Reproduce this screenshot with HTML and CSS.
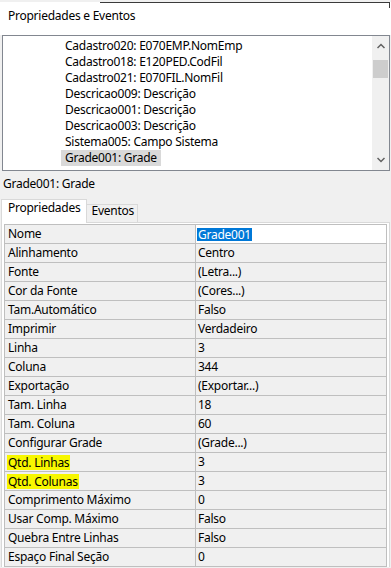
FILE: index.html
```html
<!DOCTYPE html>
<html lang="pt">
<head>
    <meta charset="UTF-8">
    <meta name="viewport" content="width=device-width, initial-scale=1.0">
    <title>Propriedades e Eventos</title>
    <link rel="stylesheet" href="styles.css">
</head>
<body>
    <div class="header">
        <div class="edge"></div>
        <h1>Propriedades e Eventos</h1>
    </div>

    <div class="list-box">
        <div class="items">
            <div class="item">Cadastro020: E070EMP.NomEmp</div>
            <div class="item">Cadastro018: E120PED.CodFil</div>
            <div class="item">Cadastro021: E070FIL.NomFil</div>
            <div class="item">Descricao009: Descrição</div>
            <div class="item">Descricao001: Descrição</div>
            <div class="item">Descricao003: Descrição</div>
            <div class="item">Sistema005: Campo Sistema</div>
            <div class="item selected">Grade001: Grade</div>
        </div>
        <div class="scrollbar">
            <div class="sb-btn">
                <svg width="8" height="6" viewBox="0 0 8 6"><polyline points="0.5,5 4,1.5 7.5,5" fill="none" stroke="#606060" stroke-width="1.5"/></svg>
            </div>
            <div class="sb-thumb"></div>
            <div class="sb-track"></div>
            <div class="sb-btn">
                <svg width="8" height="6" viewBox="0 0 8 6"><polyline points="0.5,1 4,4.5 7.5,1" fill="none" stroke="#606060" stroke-width="1.5"/></svg>
            </div>
        </div>
    </div>

    <div class="sel-label">Grade001: Grade</div>

    <div class="tabs">
        <div class="tab active">Propriedades</div>
        <div class="tab">Eventos</div>
    </div>

    <div class="panel">
        <div class="grid">
            <div class="row"><div class="name">Nome</div><div class="value editing"><span class="sel-text">Grade001</span></div></div>
            <div class="row"><div class="name">Alinhamento</div><div class="value">Centro</div></div>
            <div class="row"><div class="name">Fonte</div><div class="value">(Letra...)</div></div>
            <div class="row"><div class="name">Cor da Fonte</div><div class="value">(Cores...)</div></div>
            <div class="row"><div class="name">Tam.Automático</div><div class="value">Falso</div></div>
            <div class="row"><div class="name">Imprimir</div><div class="value">Verdadeiro</div></div>
            <div class="row"><div class="name">Linha</div><div class="value">3</div></div>
            <div class="row"><div class="name">Coluna</div><div class="value">344</div></div>
            <div class="row"><div class="name">Exportação</div><div class="value">(Exportar...)</div></div>
            <div class="row"><div class="name">Tam. Linha</div><div class="value">18</div></div>
            <div class="row"><div class="name">Tam. Coluna</div><div class="value">60</div></div>
            <div class="row"><div class="name">Configurar Grade</div><div class="value">(Grade...)</div></div>
            <div class="row"><div class="name"><span class="marker">Qtd. Linhas</span></div><div class="value">3</div></div>
            <div class="row"><div class="name"><span class="marker">Qtd. Colunas</span></div><div class="value">3</div></div>
            <div class="row"><div class="name">Comprimento Máximo</div><div class="value">0</div></div>
            <div class="row"><div class="name">Usar Comp. Máximo</div><div class="value">Falso</div></div>
            <div class="row"><div class="name">Quebra Entre Linhas</div><div class="value">Falso</div></div>
            <div class="row"><div class="name">Espaço Final Seção</div><div class="value">0</div></div>
        </div>
    </div>
</body>
</html>
```

FILE: styles.css
```css
body {
    margin: 0;
    width: 391px;
    height: 568px;
    overflow: hidden;
    background-color: #f0f0f0;
    font-family: "Noto Sans", "Open Sans", sans-serif;
    font-size: 12px;
    letter-spacing: -0.25px;
    color: #000;
}
.header {
    height: 33px;
    background-color: #fff;
}
.edge {
    margin: 2px 1px 0 100px;
    height: 5px;
    border-top: 1px solid #3a3a3a;
    border-right: 1px solid #3a3a3a;
}
.header h1 {
    margin: 0;
    padding-left: 8px;
    font-size: 12px;
    font-weight: normal;
    line-height: 16px;
}
.list-box {
    display: flex;
    height: 134px;
    margin: 0 1px 0 2px;
    border: 1px solid #828790;
    background-color: #fff;
}
.items {
    flex: 1;
    padding-top: 2px;
}
.item {
    width: fit-content;
    margin-left: 58px;
    padding: 0 4px;
    line-height: 16px;
    white-space: nowrap;
}
.item.selected {
    background-color: #d9d9d9;
}
.scrollbar {
    display: flex;
    flex-direction: column;
    width: 17px;
    background-color: #f0f0f0;
}
.sb-btn {
    display: flex;
    align-items: center;
    justify-content: center;
    height: 20px;
}
.sb-thumb {
    height: 18px;
    margin: 4px 1px 0;
    background-color: #cdcdcd;
}
.sb-track {
    flex: 1;
}
.sel-label {
    padding: 5px 0 0 3px;
    line-height: 16px;
}
.tabs {
    position: relative;
    z-index: 1;
    display: flex;
    align-items: flex-end;
    height: 24px;
    margin: 7px 0 -1px 1px;
}
.tab {
    height: 18px;
    margin-left: -1px;
    padding: 0 3px 0 4px;
    border: 1px solid #d9d9d9;
    border-bottom: none;
    line-height: 12px;
}
.tab.active {
    height: 23px;
    margin-left: 0;
    padding: 0 6px;
    background-color: #fff;
    line-height: 16px;
}
.panel {
    margin: 0 1px;
    padding: 1px 2px 0;
    border: 1px solid #d9d9d9;
    border-bottom: none;
    background-color: #fff;
}
.grid {
    border: 1px solid #bfbfbf;
    border-bottom: none;
    background-color: #f0f0f0;
}
.row {
    display: grid;
    grid-template-columns: 191px 1fr;
    border-bottom: 1px solid #bfbfbf;
    line-height: 18px;
    white-space: nowrap;
}
.name {
    padding-left: 3px;
    border-right: 1px solid #bfbfbf;
}
.value {
    padding-left: 2px;
}
.value.editing {
    padding-left: 1px;
    background-color: #fff;
}
.sel-text {
    display: inline-block;
    padding: 0 1px;
    line-height: 13px;
    vertical-align: middle;
    background-color: #0078d7;
    color: #fff;
}
.marker {
    display: inline-block;
    margin-left: -1px;
    padding: 0 1px;
    line-height: 15px;
    vertical-align: middle;
    background-color: #f7f700;
}
```
